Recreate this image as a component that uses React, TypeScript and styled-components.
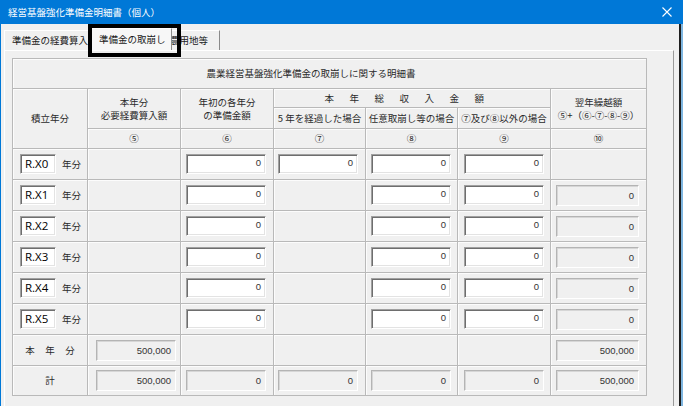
import styled, { createGlobalStyle } from "styled-components";

const GlobalStyle = createGlobalStyle`
  html, body {
    margin: 0;
    padding: 0;
    background: #f0f0f0;
    overflow: hidden;
  }
  body {
    font-family: "Noto Sans CJK JP", "Noto Sans", sans-serif;
  }
`;

const Window = styled.div`
  position: relative;
  width: 683px;
  height: 406px;
  box-sizing: border-box;
  border-left: 1px solid #0078d7;
  background: #f0f0f0;
  box-shadow: inset -2px 0 0 #7fb6e0, inset -4px 0 0 #1e1e1e;
  display: flex;
  flex-direction: column;
  overflow: hidden;
`;

const TitleBar = styled.div`
  height: 24px;
  flex-shrink: 0;
  margin-left: -1px;
  background: #0078d7;
  color: #fff;
  display: flex;
  align-items: center;
  justify-content: space-between;
  padding: 0 11px 0 8px;
  font-size: 9.5px;
`;

const TabStrip = styled.div`
  height: 26px;
  flex-shrink: 0;
  display: flex;
  align-items: flex-end;
  padding-left: 3px;
`;

const Tab = styled.div<{ $active?: boolean; $width: number; $pad: number; $shift?: number }>`
  position: relative;
  z-index: ${({ $active }) => ($active ? 2 : 1)};
  box-sizing: border-box;
  width: ${({ $width }) => $width}px;
  height: ${({ $active }) => ($active ? 22 : 20)}px;
  margin-left: ${({ $shift }) => $shift ?? 0}px;
  padding: ${({ $active }) => ($active ? 4 : 3)}px 0 0 ${({ $pad }) => $pad}px;
  background: ${({ $active }) => ($active ? "#f7f7f7" : "#f0f0f0")};
  border-top: 1px solid #fff;
  border-left: 1px solid #fff;
  border-right: 1px solid #8a8a8a;
  font-size: 9.5px;
  line-height: 13px;
  color: #1a1a1a;
  white-space: nowrap;
  overflow: hidden;
`;

// highlight frame drawn over the selected tab
const FocusFrame = styled.div`
  position: absolute;
  left: 87px;
  top: 24px;
  width: 93px;
  height: 33px;
  box-sizing: border-box;
  border: 4px solid #000;
  z-index: 5;
  pointer-events: none;
`;

const Panel = styled.div`
  flex: 1;
  margin-left: 3px;
  width: 670px;
  box-sizing: border-box;
  border-top: 1px solid #fff;
  border-left: 1px solid #fff;
  border-right: 1px solid #9a9a9a;
  padding: 7px 0 0 7px;
`;

const Sheet = styled.table`
  border-collapse: collapse;
  table-layout: fixed;
  width: 634px;
`;

const Row = styled.tr<{ $h: number }>`
  height: ${({ $h }) => $h}px;
`;

const Cell = styled.td<{ $left?: boolean }>`
  border: 1px solid #b9b9b9;
  box-shadow: inset 1px 1px 0 #fcfcfc;
  padding: ${({ $left }) => ($left ? "0 0 0 4px" : "0")};
  text-align: ${({ $left }) => ($left ? "left" : "center")};
  vertical-align: middle;
  font-size: 9.5px;
  line-height: 13px;
  color: #2a2a2a;
  white-space: nowrap;
`;

const SheetTitle = styled(Cell)`
  padding-right: 37px;
`;

const Spaced = styled.span<{ $gap: number; $lead?: boolean }>`
  letter-spacing: ${({ $gap }) => $gap}px;
  padding-left: ${({ $lead, $gap }) => ($lead ? $gap : 0)}px;
`;

const YearCell = styled.div`
  display: flex;
  align-items: center;
  gap: 6px;
  padding-left: 3px;
`;

const YearBox = styled.div`
  width: 36px;
  height: 20px;
  box-sizing: border-box;
  background: #fff;
  border: 1px solid;
  border-color: #a0a0a0 #fff #fff #a0a0a0;
  box-shadow: inset 1px 1px 0 #6e6e6e, inset -1px -1px 0 #e3e3e3;
  padding: 0 0 0 4px;
  font-family: "Open Sans", "Liberation Sans", sans-serif;
  font-size: 11.5px;
  line-height: 18px;
  color: #000;
`;

const NumBox = styled.div<{ $locked?: boolean; $w?: number; $inset?: number }>`
  width: ${({ $w }) => $w ?? 80}px;
  height: ${({ $locked }) => ($locked ? 21 : 20)}px;
  margin-left: ${({ $inset }) => $inset ?? 0}px;
  box-sizing: border-box;
  background: ${({ $locked }) => ($locked ? "#f0f0f0" : "#fff")};
  border: 1px solid;
  border-color: ${({ $locked }) =>
    $locked ? "#b4b4b4 #fff #fff #b4b4b4" : "#a0a0a0 #fff #fff #a0a0a0"};
  box-shadow: ${({ $locked }) =>
    $locked
      ? "inset 1px 1px 0 #d6d6d6"
      : "inset 1px 1px 0 #6e6e6e, inset -1px -1px 0 #e3e3e3"};
  padding-right: 4px;
  text-align: right;
  font-family: "Liberation Sans", "DejaVu Sans", sans-serif;
  font-size: 9.5px;
  line-height: ${({ $locked }) => ($locked ? 19 : 15)}px;
  color: #333;
`;

const CloseIcon = () => (
  <svg width="10" height="10" viewBox="0 0 10 10">
    <path d="M0.5 0.5 L9.5 9.5 M9.5 0.5 L0.5 9.5" stroke="#fff" strokeWidth="1.1" />
  </svg>
);

const years = ["R.X0", "R.X1", "R.X2", "R.X3", "R.X4", "R.X5"];

const App = () => {
  return (
    <>
      <GlobalStyle />
      <Window>
        <TitleBar>
          <span>経営基盤強化準備金明細書（個人）</span>
          <CloseIcon />
        </TitleBar>
        <TabStrip>
          <Tab $width={86} $pad={7}>準備金の経費算入</Tab>
          <Tab $active $width={84} $pad={10} $shift={-2}>準備金の取崩し</Tab>
          <Tab $width={52} $pad={1} $shift={-4}>農用地等</Tab>
        </TabStrip>
        <FocusFrame />
        <Panel>
          <Sheet>
            <colgroup>
              <col style={{ width: 75 }} />
              <col style={{ width: 93 }} />
              <col style={{ width: 93 }} />
              <col style={{ width: 92 }} />
              <col style={{ width: 92 }} />
              <col style={{ width: 93 }} />
              <col style={{ width: 96 }} />
            </colgroup>
            <tbody>
              <Row $h={30}>
                <SheetTitle colSpan={7}>農業経営基盤強化準備金の取崩しに関する明細書</SheetTitle>
              </Row>
              <Row $h={19}>
                <Cell rowSpan={3}>積立年分</Cell>
                <Cell rowSpan={2}>
                  本年分
                  <br />
                  必要経費算入額
                </Cell>
                <Cell rowSpan={2}>
                  年初の各年分
                  <br />
                  の準備金額
                </Cell>
                <Cell colSpan={3}>
                  <Spaced $gap={15.5}>本年総収入金額</Spaced>
                </Cell>
                <Cell rowSpan={2}>
                  翌年繰越額
                  <br />
                  ⑤+（⑥-⑦-⑧-⑨）
                </Cell>
              </Row>
              <Row $h={21}>
                <Cell>5 年を経過した場合</Cell>
                <Cell>任意取崩し等の場合</Cell>
                <Cell>⑦及び⑧以外の場合</Cell>
              </Row>
              <Row $h={20}>
                <Cell>⑤</Cell>
                <Cell>⑥</Cell>
                <Cell>⑦</Cell>
                <Cell>⑧</Cell>
                <Cell>⑨</Cell>
                <Cell>⑩</Cell>
              </Row>
              {years.map((year, i) => (
                <Row $h={31} key={year}>
                  <Cell $left>
                    <YearCell>
                      <YearBox>{year}</YearBox>
                      <span>年分</span>
                    </YearCell>
                  </Cell>
                  <Cell />
                  <Cell $left>
                    <NumBox $inset={1}>0</NumBox>
                  </Cell>
                  <Cell $left>{i === 0 && <NumBox $inset={0}>0</NumBox>}</Cell>
                  <Cell $left>
                    <NumBox $inset={1}>0</NumBox>
                  </Cell>
                  <Cell $left>
                    <NumBox $inset={2}>0</NumBox>
                  </Cell>
                  <Cell $left>
                    {i > 0 && (
                      <NumBox $locked $w={83} $inset={1}>
                        0
                      </NumBox>
                    )}
                  </Cell>
                </Row>
              ))}
              <Row $h={31}>
                <Cell>
                  <Spaced $gap={10.5} $lead>
                    本年分
                  </Spaced>
                </Cell>
                <Cell $left>
                  <NumBox $locked $inset={4}>
                    500,000
                  </NumBox>
                </Cell>
                <Cell />
                <Cell />
                <Cell />
                <Cell />
                <Cell $left>
                  <NumBox $locked $w={83} $inset={1}>
                    500,000
                  </NumBox>
                </Cell>
              </Row>
              <Row $h={30}>
                <Cell>計</Cell>
                <Cell $left>
                  <NumBox $locked $inset={4}>
                    500,000
                  </NumBox>
                </Cell>
                <Cell $left>
                  <NumBox $locked $inset={1}>
                    0
                  </NumBox>
                </Cell>
                <Cell $left>
                  <NumBox $locked $inset={0}>
                    0
                  </NumBox>
                </Cell>
                <Cell $left>
                  <NumBox $locked $inset={1}>
                    0
                  </NumBox>
                </Cell>
                <Cell $left>
                  <NumBox $locked $inset={2}>
                    0
                  </NumBox>
                </Cell>
                <Cell $left>
                  <NumBox $locked $w={83} $inset={1}>
                    500,000
                  </NumBox>
                </Cell>
              </Row>
            </tbody>
          </Sheet>
        </Panel>
      </Window>
    </>
  );
};

export default App;
